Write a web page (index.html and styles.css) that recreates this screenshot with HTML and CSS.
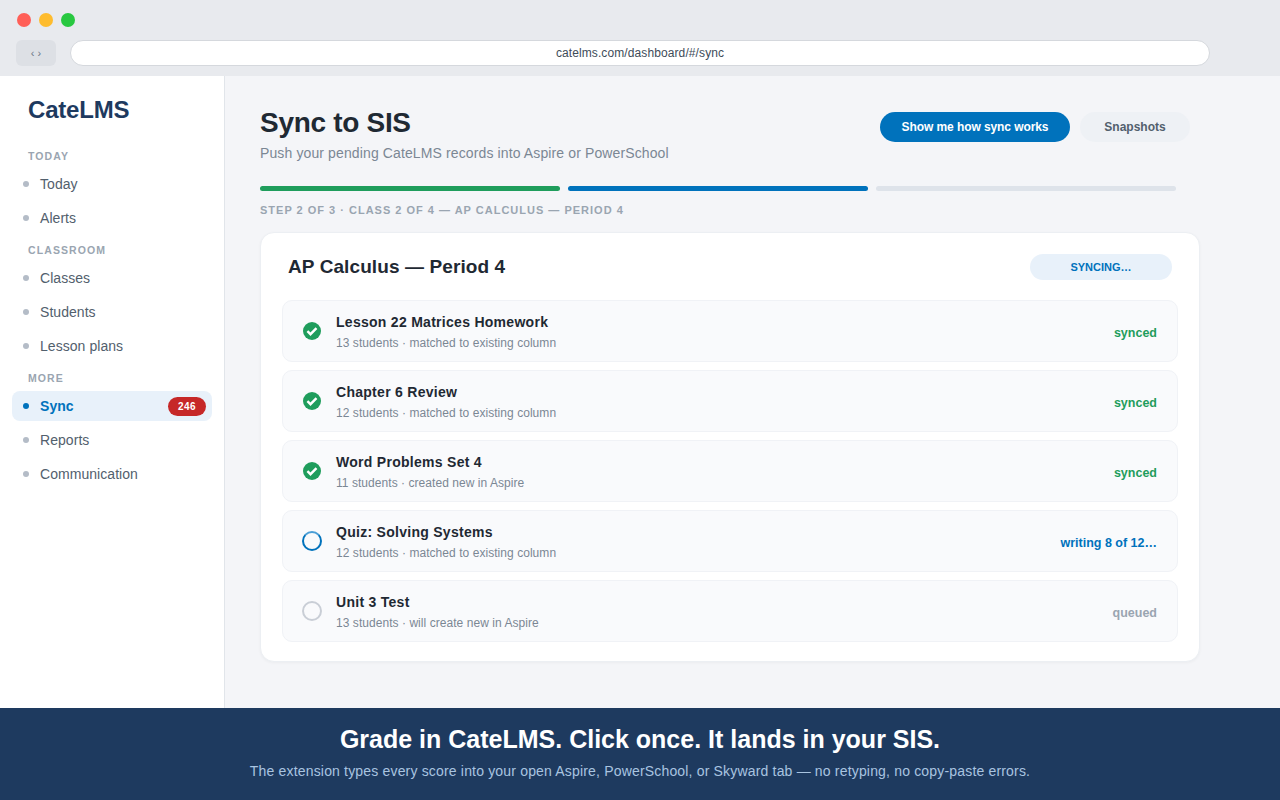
FILE: index.html
```html
<!DOCTYPE html>
<html lang="en">
<head>
    <meta charset="UTF-8">
    <meta name="viewport" content="width=device-width, initial-scale=1.0">
    <title>CateLMS | Sync</title>
    <link rel="stylesheet" href="styles.css">
</head>
<body>
    <div class="browser-bar">
        <div class="traffic-lights">
            <span class="light red"></span>
            <span class="light yellow"></span>
            <span class="light green"></span>
        </div>
        <div class="browser-row">
            <div class="nav-buttons">‹ ›</div>
            <div class="url-bar">catelms.com/dashboard/#/sync</div>
        </div>
    </div>

    <div class="app">
        <aside class="sidebar">
            <div class="logo">CateLMS</div>

            <div class="nav-label first">TODAY</div>
            <a class="nav-item"><span class="dot"></span>Today</a>
            <a class="nav-item"><span class="dot"></span>Alerts</a>

            <div class="nav-label">CLASSROOM</div>
            <a class="nav-item"><span class="dot"></span>Classes</a>
            <a class="nav-item"><span class="dot"></span>Students</a>
            <a class="nav-item"><span class="dot"></span>Lesson plans</a>

            <div class="nav-label">MORE</div>
            <a class="nav-item active"><span class="dot"></span>Sync<span class="nav-badge">246</span></a>
            <a class="nav-item"><span class="dot"></span>Reports</a>
            <a class="nav-item"><span class="dot"></span>Communication</a>
        </aside>

        <main class="main">
            <div class="page-head">
                <div>
                    <h1 class="page-title">Sync to SIS</h1>
                    <p class="page-sub">Push your pending CateLMS records into Aspire or PowerSchool</p>
                </div>
                <div class="page-actions">
                    <button class="btn primary">Show me how sync works</button>
                    <button class="btn plain">Snapshots</button>
                </div>
            </div>

            <div class="progress">
                <span class="step done"></span>
                <span class="step current"></span>
                <span class="step"></span>
            </div>
            <div class="step-label">STEP 2 OF 3 · CLASS 2 OF 4 — AP CALCULUS — PERIOD 4</div>

            <section class="card">
                <div class="card-head">
                    <h2 class="card-title">AP Calculus — Period 4</h2>
                    <span class="pill">SYNCING…</span>
                </div>

                <div class="row">
                    <svg class="status-icon" viewBox="0 0 20 20"><circle cx="10" cy="10" r="9" fill="#1f9d5c"/><path d="M5.4 10.2l3.1 3 6-6" fill="none" stroke="#fff" stroke-width="2.4"/></svg>
                    <div class="row-text">
                        <div class="row-title">Lesson 22 Matrices Homework</div>
                        <div class="row-meta">13 students · matched to existing column</div>
                    </div>
                    <span class="row-state synced">synced</span>
                </div>

                <div class="row">
                    <svg class="status-icon" viewBox="0 0 20 20"><circle cx="10" cy="10" r="9" fill="#1f9d5c"/><path d="M5.4 10.2l3.1 3 6-6" fill="none" stroke="#fff" stroke-width="2.4"/></svg>
                    <div class="row-text">
                        <div class="row-title">Chapter 6 Review</div>
                        <div class="row-meta">12 students · matched to existing column</div>
                    </div>
                    <span class="row-state synced">synced</span>
                </div>

                <div class="row">
                    <svg class="status-icon" viewBox="0 0 20 20"><circle cx="10" cy="10" r="9" fill="#1f9d5c"/><path d="M5.4 10.2l3.1 3 6-6" fill="none" stroke="#fff" stroke-width="2.4"/></svg>
                    <div class="row-text">
                        <div class="row-title">Word Problems Set 4</div>
                        <div class="row-meta">11 students · created new in Aspire</div>
                    </div>
                    <span class="row-state synced">synced</span>
                </div>

                <div class="row">
                    <span class="ring writing"></span>
                    <div class="row-text">
                        <div class="row-title">Quiz: Solving Systems</div>
                        <div class="row-meta">12 students · matched to existing column</div>
                    </div>
                    <span class="row-state writing">writing 8 of 12…</span>
                </div>

                <div class="row">
                    <span class="ring"></span>
                    <div class="row-text">
                        <div class="row-title">Unit 3 Test</div>
                        <div class="row-meta">13 students · will create new in Aspire</div>
                    </div>
                    <span class="row-state queued">queued</span>
                </div>
            </section>
        </main>
    </div>

    <footer class="banner">
        <div class="banner-title">Grade in CateLMS. Click once. It lands in your SIS.</div>
        <div class="banner-sub">The extension types every score into your open Aspire, PowerSchool, or Skyward tab — no retyping, no copy-paste errors.</div>
    </footer>
</body>
</html>
```

FILE: styles.css
```css
* {
    margin: 0;
    padding: 0;
    box-sizing: border-box;
}

body {
    width: 1280px;
    height: 800px;
    display: flex;
    flex-direction: column;
    overflow: hidden;
    background: #f4f5f8;
    color: #1f2933;
    font-family: "Liberation Sans", Arial, sans-serif;
}

/* browser chrome */
.browser-bar {
    height: 76px;
    flex-shrink: 0;
    padding: 13px 16px 0;
    background: #e8eaee;
}

.traffic-lights {
    display: flex;
    gap: 8px;
    padding-left: 1px;
}

.light {
    width: 14px;
    height: 14px;
    border-radius: 50%;
}

.light.red { background: #ff5f57; }
.light.yellow { background: #febc2e; }
.light.green { background: #28c840; }

.browser-row {
    display: flex;
    align-items: center;
    gap: 14px;
    margin-top: 13px;
}

.nav-buttons {
    width: 40px;
    height: 26px;
    border-radius: 6px;
    background: #dde0e5;
    color: #6b7785;
    font-size: 11px;
    line-height: 26px;
    text-align: center;
}

.url-bar {
    width: 1140px;
    height: 26px;
    border: 1px solid #d5d8dd;
    border-radius: 13px;
    background: #fff;
    color: #3e4c59;
    font-size: 12px;
    letter-spacing: 0.1px;
    line-height: 24px;
    text-align: center;
}

.app {
    flex: 1;
    display: flex;
    min-height: 0;
}

/* sidebar */
.sidebar {
    width: 225px;
    flex-shrink: 0;
    padding: 20px 12px 0;
    border-right: 1px solid #e1e5ea;
    background: #fff;
}

.logo {
    padding-left: 16px;
    color: #1e3a5f;
    font-size: 24px;
    font-weight: 700;
    letter-spacing: -0.2px;
    line-height: 28px;
}

.nav-label {
    margin-top: 9px;
    margin-bottom: 5px;
    padding-left: 16px;
    color: #9aa5b1;
    font-size: 10.5px;
    font-weight: 700;
    letter-spacing: 1.1px;
    line-height: 16px;
}

.nav-label.first {
    margin-top: 24px;
}

.nav-item {
    display: flex;
    align-items: center;
    height: 30px;
    margin: 2px 0;
    padding: 0 6px 0 11px;
    border-radius: 8px;
    color: #52606d;
    font-size: 14px;
    letter-spacing: 0.05px;
}

.nav-item + .nav-item {
    margin-top: 4px;
}

.dot {
    width: 6px;
    height: 6px;
    margin-right: 11px;
    border-radius: 50%;
    background: #b4bcc7;
}

.nav-item.active {
    background: #e8f1fa;
    color: #0072bc;
    font-weight: 700;
}

.nav-item.active .dot {
    background: #0072bc;
}

.nav-badge {
    width: 38px;
    margin-left: auto;
    border-radius: 10px;
    background: #c62828;
    color: #fff;
    font-size: 10px;
    font-weight: 700;
    letter-spacing: 0.5px;
    line-height: 19px;
    text-align: center;
}

/* main column */
.main {
    flex: 1;
    padding: 29px 80px 0 35px;
}

.page-head {
    display: flex;
    justify-content: space-between;
    align-items: flex-start;
}

.page-title {
    font-size: 28px;
    font-weight: 700;
    letter-spacing: -0.3px;
    line-height: 36px;
}

.page-sub {
    margin-top: 3px;
    color: #7b8794;
    font-size: 14px;
    letter-spacing: 0.12px;
    line-height: 18px;
}

.page-actions {
    display: flex;
    gap: 10px;
    margin-top: 7px;
    margin-right: 10px;
}

.btn {
    height: 30px;
    border: none;
    border-radius: 15px;
    font-family: inherit;
    font-size: 12px;
    font-weight: 700;
}

.btn.primary {
    width: 190px;
    background: #0072bc;
    color: #fff;
    letter-spacing: -0.08px;
}

.btn.plain {
    width: 110px;
    background: #eef1f5;
    color: #52606d;
}

.progress {
    display: flex;
    gap: 8px;
    margin-top: 24px;
}

.step {
    width: 300px;
    height: 5px;
    border-radius: 3px;
    background: #dee3ea;
}

.step.done { background: #1f9d5c; }
.step.current { background: #0072bc; }

.step-label {
    margin-top: 11px;
    color: #9aa5b1;
    font-size: 11px;
    font-weight: 700;
    letter-spacing: 1px;
    line-height: 16px;
}

.card {
    margin-top: 14px;
    padding: 14px 21px 19px;
    border: 1px solid #eceff3;
    border-radius: 14px;
    background: #fff;
    box-shadow: 0 1px 3px rgba(0, 0, 0, 0.04);
}

.card-head {
    display: flex;
    justify-content: space-between;
    align-items: center;
    height: 40px;
    margin-bottom: 13px;
    padding: 0 6px;
}

.card-title {
    font-size: 19px;
    font-weight: 700;
    letter-spacing: 0.1px;
}

.pill {
    width: 142px;
    height: 26px;
    border-radius: 13px;
    background: #e8f1fa;
    color: #0072bc;
    font-size: 11px;
    font-weight: 700;
    line-height: 26px;
    text-align: center;
}

.row {
    display: flex;
    align-items: center;
    height: 62px;
    margin-bottom: 8px;
    padding: 0 20px 0 19px;
    border: 1px solid #f0f2f6;
    border-radius: 10px;
    background: #f9fafc;
}

.row:last-child {
    margin-bottom: 0;
}

.status-icon {
    width: 20px;
    height: 20px;
    margin-right: 14px;
    flex-shrink: 0;
}

.ring {
    width: 20px;
    height: 20px;
    margin-right: 14px;
    flex-shrink: 0;
    border: 2px solid #c9ced6;
    border-radius: 50%;
}

.ring.writing {
    border-color: #0072bc;
    border-top-color: #4a9ed6;
}

.row-text {
    flex: 1;
    padding-top: 1px;
}

.row-title {
    color: #1f2933;
    font-size: 14px;
    font-weight: 700;
    letter-spacing: 0.28px;
    line-height: 18px;
}

.row-meta {
    margin-top: 4px;
    color: #7b8794;
    font-size: 12px;
    letter-spacing: 0.05px;
    line-height: 16px;
}

.row-state {
    margin-top: 3px;
    font-size: 12.5px;
    font-weight: 700;
}

.row-state.synced { color: #1f9d5c; }
.row-state.writing { color: #0072bc; }
.row-state.queued { color: #9aa5b1; }

/* bottom banner */
.banner {
    height: 92px;
    flex-shrink: 0;
    padding-top: 16px;
    background: #1e3a5f;
    text-align: center;
}

.banner-title {
    color: #fff;
    font-size: 25px;
    font-weight: 700;
    line-height: 30px;
}

.banner-sub {
    margin-top: 8px;
    color: #a9c4e0;
    font-size: 14px;
    letter-spacing: 0.175px;
    line-height: 18px;
}
```
